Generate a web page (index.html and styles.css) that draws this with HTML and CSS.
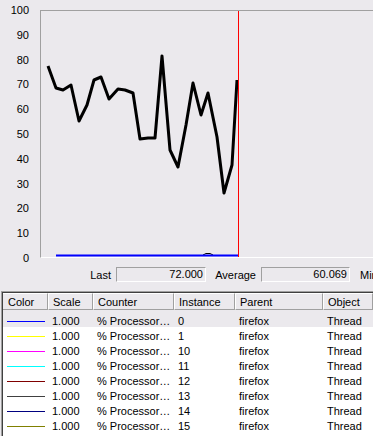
FILE: index.html
```html
<!DOCTYPE html>
<html>
<head>
    <link rel="stylesheet" href="styles.css">
</head>
<body>
    <div class="chart">
        <div class="axis">
            <span>100</span>
            <span>90</span>
            <span>80</span>
            <span>70</span>
            <span>60</span>
            <span>50</span>
            <span>40</span>
            <span>30</span>
            <span>20</span>
            <span>10</span>
            <span>0</span>
        </div>
        <div class="plot">
            <svg class="graph" width="332" height="246" viewBox="41 11 332 246">
                <polyline class="series" points="48,66 56,88 63,90 71,85 79,121 87,105 94,80 101,77 109,99 118,89 125,90 133,93 140,139 148,138 155,138 162,56 170,150 178,167 186,125 193,83 201,115 208,93 217,137 224,193 232,165 237,80"/>
                <path class="blip" d="M203 255 L206 253.5 L210 253.5 L213 255"/>
                <line class="zero" x1="56" y1="255.5" x2="238" y2="255.5"/>
                <line class="cursor" x1="238.5" y1="11" x2="238.5" y2="257"/>
            </svg>
        </div>
    </div>

    <div class="stats">
        <span class="label">Last</span>
        <span class="value">72.000</span>
        <span class="label">Average</span>
        <span class="value">60.069</span>
        <span class="label label-min">Min</span>
    </div>

    <div class="list">
        <div class="list-inner">
            <div class="head">
                <div>Color</div>
                <div>Scale</div>
                <div>Counter</div>
                <div>Instance</div>
                <div>Parent</div>
                <div>Object</div>
            </div>
            <div class="row selected">
                <div><i class="swatch" style="background: #0000ff"></i></div>
                <div>1.000</div><div>% Processor…</div><div>0</div><div>firefox</div><div>Thread</div>
            </div>
            <div class="row">
                <div><i class="swatch" style="background: #ffff00"></i></div>
                <div>1.000</div><div>% Processor…</div><div>1</div><div>firefox</div><div>Thread</div>
            </div>
            <div class="row">
                <div><i class="swatch" style="background: #ff00ff"></i></div>
                <div>1.000</div><div>% Processor…</div><div>10</div><div>firefox</div><div>Thread</div>
            </div>
            <div class="row">
                <div><i class="swatch" style="background: #00ffff"></i></div>
                <div>1.000</div><div>% Processor…</div><div>11</div><div>firefox</div><div>Thread</div>
            </div>
            <div class="row">
                <div><i class="swatch" style="background: #800000"></i></div>
                <div>1.000</div><div>% Processor…</div><div>12</div><div>firefox</div><div>Thread</div>
            </div>
            <div class="row">
                <div><i class="swatch" style="background: #404040"></i></div>
                <div>1.000</div><div>% Processor…</div><div>13</div><div>firefox</div><div>Thread</div>
            </div>
            <div class="row">
                <div><i class="swatch" style="background: #000080"></i></div>
                <div>1.000</div><div>% Processor…</div><div>14</div><div>firefox</div><div>Thread</div>
            </div>
            <div class="row">
                <div><i class="swatch" style="background: #808000"></i></div>
                <div>1.000</div><div>% Processor…</div><div>15</div><div>firefox</div><div>Thread</div>
            </div>
        </div>
    </div>
</body>
</html>
```

FILE: styles.css
```css
body {
    margin: 0;
    width: 373px;
    height: 436px;
    overflow: hidden;
    background-color: #ebe9ed;
    font-family: "Liberation Sans", Arial, sans-serif;
    font-size: 11px;
    color: #000;
}

/* chart */
.chart {
    display: flex;
    height: 265px;
}
.axis {
    width: 29px;
    padding: 4px 11px 0 0;
    height: 261px;
    display: flex;
    flex-direction: column;
    justify-content: space-between;
    align-items: flex-end;
    line-height: 13px;
}
.plot {
    flex: 1;
    margin-top: 10px;
    height: 246px;
    border-top: 1px solid #a0a0a0;
    border-left: 1px solid #a0a0a0;
    border-bottom: 1px solid #fff;
}
.graph {
    display: block;
}
.series {
    fill: none;
    stroke: #000;
    stroke-width: 3;
    stroke-linejoin: round;
}
.blip {
    fill: none;
    stroke: #000;
    stroke-width: 1;
}
.zero {
    stroke: #0000ff;
    stroke-width: 2;
}
.cursor {
    stroke: #ff0000;
    stroke-width: 1;
}

/* last / average */
.stats {
    display: grid;
    grid-template-columns: 116px 90px 55px 89px auto;
    align-items: center;
    height: 15px;
    margin-top: 2px;
}
.label {
    text-align: right;
    padding-right: 5px;
}
.label-min {
    text-align: left;
    padding-left: 10px;
}
.value {
    box-sizing: border-box;
    height: 15px;
    line-height: 13px;
    text-align: right;
    padding-right: 2px;
    border: 1px solid;
    border-color: #a0a0a0 #fff #fff #a0a0a0;
}

/* counter list */
.list {
    margin: 9px 0 0 1px;
    border-top: 1px solid #a0a0a0;
    border-left: 1px solid #a0a0a0;
}
.list-inner {
    border-top: 1px solid #404040;
    border-left: 1px solid #404040;
    background-color: #fff;
    height: 143px;
    overflow: hidden;
}
.head, .row {
    display: grid;
    grid-template-columns: 45px 45px 81px 61px 88px 1fr;
}
.head {
    background-color: #ebe9ed;
}
.head div {
    box-sizing: border-box;
    height: 17px;
    line-height: 16px;
    padding-left: 4px;
    border-top: 1px solid #fff;
    border-left: 1px solid #fff;
    border-right: 1px solid #a0a0a0;
    border-bottom: 1px solid #a0a0a0;
    white-space: nowrap;
    overflow: hidden;
}
.head div:first-child {
    border-left: none;
    padding-left: 5px;
}
.row {
    height: 15px;
    line-height: 12px;
}
.row div {
    padding: 3px 0 0 4px;
    white-space: nowrap;
    overflow: hidden;
}
.row div:first-child {
    display: flex;
    align-items: center;
}
.row.selected {
    height: 17px;
    background-color: #ebe9ed;
}
.row.selected div {
    padding-top: 5px;
}
.swatch {
    display: block;
    width: 38px;
    height: 1px;
}
```
